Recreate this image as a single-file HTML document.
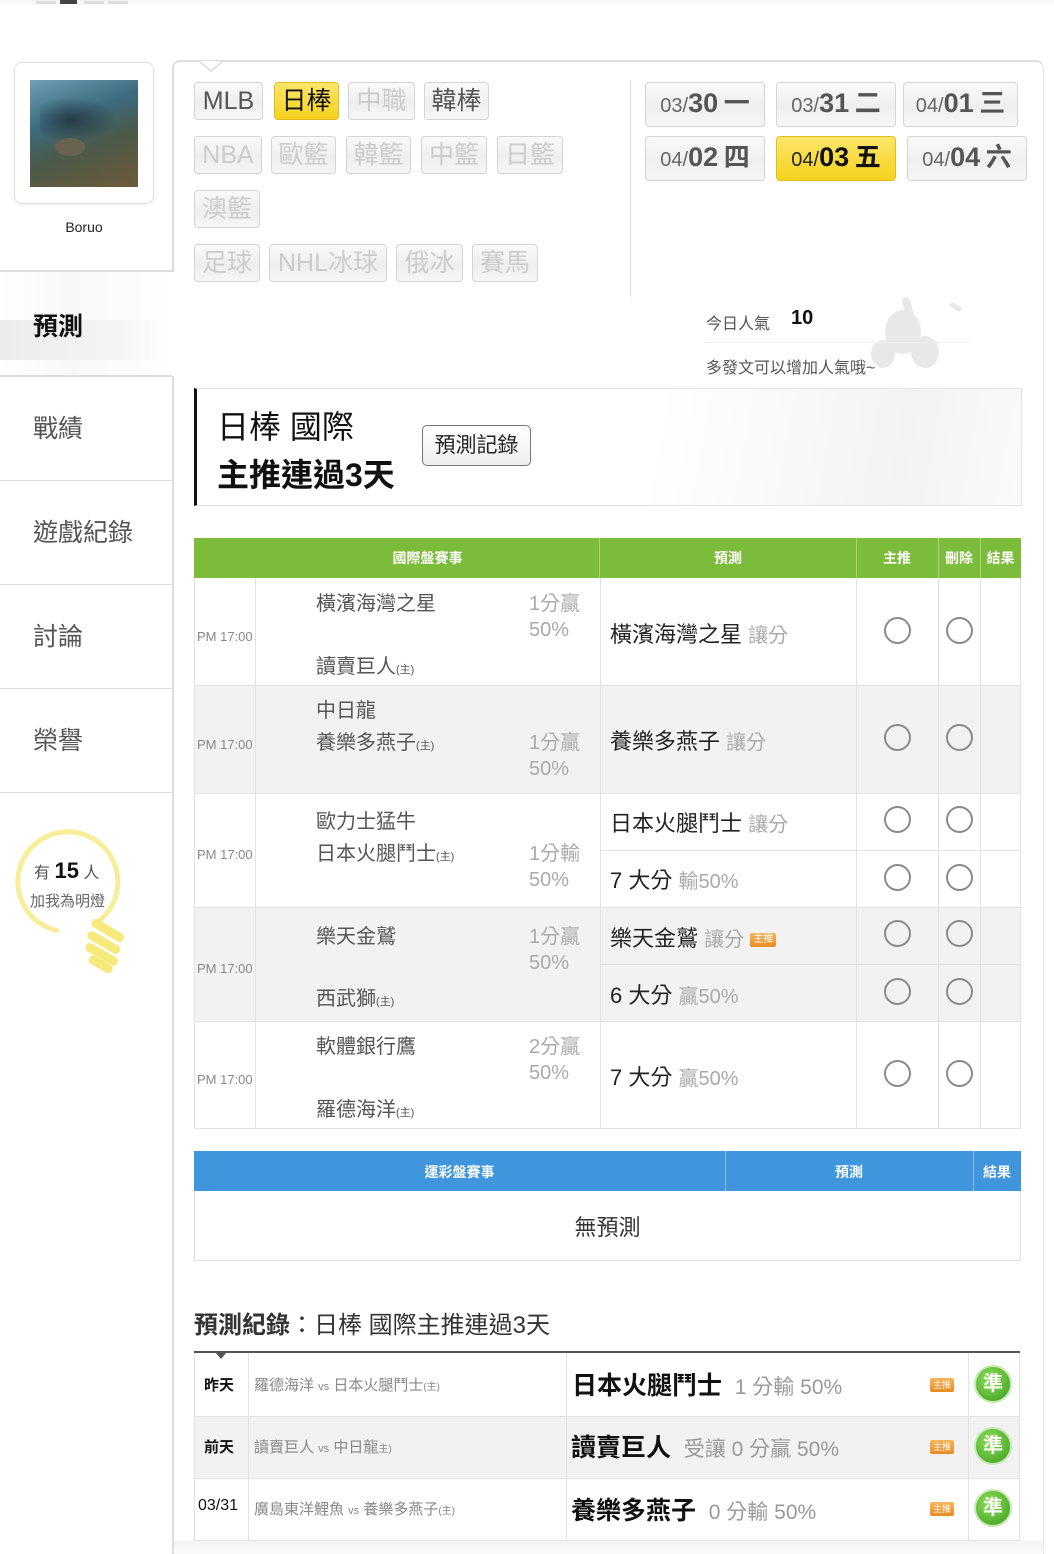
<!DOCTYPE html>
<html style="width:1054px;height:1554px;overflow:hidden"><head><meta charset="utf-8">
<style>
*{margin:0;padding:0;box-sizing:border-box}
body{width:1054px;height:1554px;position:relative;background:#fff;font-family:"Liberation Sans","Noto Sans CJK TC",sans-serif;overflow:hidden;color:#333}
.a{position:absolute}
.btn{position:absolute;border:1px solid #d4d4d4;border-radius:4px;background:linear-gradient(#fafafa,#eee 55%,#f6f6f6);font-size:25px;color:#ccc;text-align:center;line-height:36px;white-space:nowrap}
.btn.on{background:linear-gradient(#fde66a,#f5d21d);border-color:#e0be20;color:#111}
.btn.dk{color:#555}
.dt{position:absolute;border:1px solid #d4d4d4;border-radius:4px;background:linear-gradient(#fafafa,#efefef 55%,#f6f6f6);font-size:20px;color:#666;text-align:center;line-height:40px;white-space:nowrap}
.dt b{font-size:27px;color:#555}
.dt i{font-style:normal;font-size:26px;color:#555;font-weight:bold}
.dt.on{background:linear-gradient(#fde66a,#f5d21d);border-color:#e0be20;color:#222}
.dt.on b,.dt.on i{color:#111}
.menu{position:absolute;left:0;width:172px;height:104px;border-bottom:1px solid #ddd;font-size:25px;color:#555;padding-left:33px;line-height:104px}
.hl{position:absolute;background:#e2e2e2}
.t{position:absolute;white-space:nowrap}
.tm{font-size:13px;color:#888}
.tn{font-size:20px;color:#555}
.od{font-size:20px;color:#aaa}
.pr{font-size:22px;color:#222}
.pr span{color:#aaa;font-size:20px}
.c{position:absolute;width:27px;height:27px;border:2px solid #8a8a8a;border-radius:50%}
.zt{display:inline-block;background:linear-gradient(#f9b65c,#e98a20);color:#fff;font-size:10px;line-height:14px;padding:0 3px;border-radius:2px;vertical-align:middle}
.zh{position:absolute;width:38px;height:38px;border-radius:50%;background:radial-gradient(circle at 40% 35%,#8ee05a,#3a9a1c);border:2px solid #c8e9b4;color:#fff;font-size:20px;text-align:center;line-height:34px;font-weight:bold}
</style></head><body>
<div class="a" style="left:0;top:0;width:1054px;height:6px;background:linear-gradient(#f3f3f3,#fff)"></div>
<div class="a" style="left:36px;top:1px;width:20px;height:3px;background:#ddd"></div>
<div class="a" style="left:60px;top:0;width:17px;height:4px;background:#444"></div>
<div class="a" style="left:84px;top:1px;width:20px;height:3px;background:#ddd"></div>
<div class="a" style="left:108px;top:1px;width:20px;height:3px;background:#ddd"></div>

<div class="a" style="left:14px;top:62px;width:140px;height:142px;border:1px solid #e0e0e0;border-radius:8px;box-shadow:0 1px 3px rgba(0,0,0,.08)"></div>
<div class="a" style="left:30px;top:80px;width:108px;height:107px;background:linear-gradient(160deg,#6f9fb5 0%,#3c6b7f 35%,#4b5a4a 60%,#6e5a3a 100%)"></div>
<div class="a" style="left:40px;top:95px;width:80px;height:50px;background:radial-gradient(ellipse at 40% 50%,rgba(30,40,50,.7),transparent 65%)"></div>
<div class="a" style="left:55px;top:138px;width:30px;height:18px;border-radius:50%;background:#6a6250"></div>
<div class="t" style="left:0;width:168px;text-align:center;top:219px;font-size:14px;color:#222">Boruo</div>
<div class="a" style="left:0;top:270px;width:174px;height:2px;background:#ddd"></div>
<div class="a" style="left:0;top:272px;width:174px;height:104px;background:linear-gradient(90deg,#fff 0%,#f8f8f8 40%,#fff 100%)"></div>
<div class="a" style="left:0;top:320px;width:170px;height:40px;background:linear-gradient(90deg,#ececec,#f4f4f4 70%,#fff)"></div>
<div class="t" style="left:33px;top:307px;font-size:25px;font-weight:bold;color:#111">預測</div>
<div class="a" style="left:0;top:375px;width:172px;height:2px;background:#ddd"></div>
<div class="menu" style="top:377px">戰績</div>
<div class="menu" style="top:481px">遊戲紀錄</div>
<div class="menu" style="top:585px">討論</div>
<div class="menu" style="top:689px">榮譽</div>
<svg class="a" style="left:8px;top:826px" width="125" height="152" viewBox="0 0 125 152">
<path d="M51 105 A50 50 0 1 1 85 99" fill="none" stroke="#f8ee9a" stroke-width="5"/>
<g fill="#f7ea7c"><rect x="82" y="100" width="36" height="9" rx="4" transform="rotate(30 100 104)"/><rect x="78" y="112" width="36" height="9" rx="4" transform="rotate(30 96 116)"/><rect x="76" y="124" width="36" height="9" rx="4" transform="rotate(30 94 128)"/><rect x="80" y="134" width="26" height="9" rx="4" transform="rotate(30 93 138)"/></g>
</svg>
<div class="t" style="left:34px;top:858px;font-size:16px;color:#555">有 <b style="font-size:22px;color:#111">15</b> 人</div>
<div class="t" style="left:30px;top:890px;font-size:15px;color:#666">加我為明燈</div>

<div class="a" style="left:172px;top:60px;width:872px;height:1494px;border:2px solid #ddd;border-right:1px solid #e6e6e6;border-radius:8px 8px 0 0;border-bottom:none"></div>
<div class="a" style="left:200px;top:61px;width:20px;height:10px;background:#fff"></div>
<svg class="a" style="left:200px;top:60px" width="22" height="12"><path d="M0 2 L11 11 L22 2" fill="none" stroke="#ddd" stroke-width="1.5"/></svg>
<div class="a" style="left:172px;top:272px;width:3px;height:104px;background:#fff"></div>

<div class="btn dk" style="left:194px;top:82px;width:69px">MLB</div>
<div class="btn on" style="left:274px;top:82px;width:65px">日棒</div>
<div class="btn" style="left:348px;top:82px;width:67px">中職</div>
<div class="btn dk" style="left:424px;top:82px;width:65px">韓棒</div>
<div class="btn" style="left:194px;top:136px;width:68px">NBA</div>
<div class="btn" style="left:271px;top:136px;width:65px">歐籃</div>
<div class="btn" style="left:346px;top:136px;width:65px">韓籃</div>
<div class="btn" style="left:421px;top:136px;width:66px">中籃</div>
<div class="btn" style="left:497px;top:136px;width:66px">日籃</div>
<div class="btn" style="left:194px;top:190px;width:66px">澳籃</div>
<div class="btn" style="left:194px;top:244px;width:66px">足球</div>
<div class="btn" style="left:269px;top:244px;width:118px">NHL冰球</div>
<div class="btn" style="left:396px;top:244px;width:67px">俄冰</div>
<div class="btn" style="left:472px;top:244px;width:66px">賽馬</div>
<div class="a" style="left:630px;top:80px;width:1px;height:217px;background:#ddd"></div>

<div class="dt" style="left:645px;top:82px;width:120px">03/<b>30</b> <i>一</i></div>
<div class="dt" style="left:776px;top:82px;width:120px">03/<b>31</b> <i>二</i></div>
<div class="dt" style="left:903px;top:82px;width:115px">04/<b>01</b> <i>三</i></div>
<div class="dt" style="left:645px;top:136px;width:120px">04/<b>02</b> <i>四</i></div>
<div class="dt on" style="left:776px;top:136px;width:120px">04/<b>03</b> <i>五</i></div>
<div class="dt" style="left:907px;top:136px;width:120px">04/<b>04</b> <i>六</i></div>

<svg class="a" style="left:855px;top:292px" width="120" height="90"><g fill="#e8e8e8"><ellipse cx="48" cy="40" rx="18" ry="22"/><ellipse cx="70" cy="60" rx="14" ry="16"/><ellipse cx="28" cy="62" rx="12" ry="14"/><rect x="50" y="5" width="8" height="30" rx="4" transform="rotate(-15 54 20)"/><rect x="95" y="12" width="12" height="5" rx="2" transform="rotate(30 100 14)"/></g></svg>
<div class="t" style="left:706px;top:310px;font-size:16px;color:#555">今日人氣</div>
<div class="t" style="left:791px;top:307px;font-size:20px;font-weight:bold;color:#111">10</div>
<div class="a" style="left:705px;top:342px;width:265px;height:1px;background:#eee"></div>
<div class="t" style="left:706px;top:354px;font-size:16px;color:#555">多發文可以增加人氣哦~</div>

<div class="a" style="left:194px;top:388px;width:828px;height:118px;border:1px solid #e2e2e2;border-left:3px solid #111;background:linear-gradient(100deg,#fff 55%,#f3f3f3 85%,#fafafa)"></div>
<div class="t" style="left:217px;top:402px;font-size:32px;color:#111">日棒 國際</div>
<div class="t" style="left:217px;top:450px;font-size:32px;font-weight:bold;color:#111">主推連過3天</div>
<div class="a" style="left:422px;top:425px;width:109px;height:41px;border:1px solid #777;border-radius:5px;background:linear-gradient(#fff,#eee);font-size:21px;line-height:39px;text-align:center;color:#222">預測記錄</div>

<div class="a" style="left:194px;top:538px;width:827px;height:40px;background:#7cbc3b"></div>
<div class="t" style="left:255px;width:345px;text-align:center;top:548px;font-size:14px;font-weight:bold;color:#fff">國際盤賽事</div>
<div class="t" style="left:600px;width:256px;text-align:center;top:548px;font-size:14px;font-weight:bold;color:#fff">預測</div>
<div class="t" style="left:856px;width:82px;text-align:center;top:548px;font-size:14px;font-weight:bold;color:#fff">主推</div>
<div class="t" style="left:938px;width:42px;text-align:center;top:548px;font-size:14px;font-weight:bold;color:#fff">刪除</div>
<div class="t" style="left:980px;width:41px;text-align:center;top:548px;font-size:14px;font-weight:bold;color:#fff">結果</div>
<div class="a" style="left:599px;top:538px;width:1px;height:40px;background:#aad282"></div>
<div class="a" style="left:856px;top:538px;width:1px;height:40px;background:#aad282"></div>
<div class="a" style="left:938px;top:538px;width:1px;height:40px;background:#aad282"></div>
<div class="a" style="left:980px;top:538px;width:1px;height:40px;background:#aad282"></div>

<div class="a" style="left:194px;top:578px;width:827px;height:551px;border:1px solid #e2e2e2;border-top:none"></div>
<div class="a" style="left:195px;top:686px;width:825px;height:107px;background:#f2f2f2"></div>
<div class="a" style="left:195px;top:908px;width:825px;height:113px;background:#f2f2f2"></div>
<div class="hl" style="left:194px;top:685px;width:827px;height:1px"></div>
<div class="hl" style="left:194px;top:793px;width:827px;height:1px"></div>
<div class="hl" style="left:194px;top:907px;width:827px;height:1px"></div>
<div class="hl" style="left:194px;top:1021px;width:827px;height:1px"></div>
<div class="hl" style="left:600px;top:850px;width:421px;height:1px"></div>
<div class="hl" style="left:600px;top:964px;width:421px;height:1px"></div>
<div class="hl" style="left:255px;top:578px;width:1px;height:550px"></div>
<div class="hl" style="left:600px;top:578px;width:1px;height:550px"></div>
<div class="hl" style="left:856px;top:578px;width:1px;height:550px"></div>
<div class="hl" style="left:938px;top:578px;width:1px;height:550px"></div>
<div class="hl" style="left:980px;top:578px;width:1px;height:550px"></div>

<div class="t tm" style="left:197px;top:629px">PM 17:00</div>
<div class="t tn" style="left:316px;top:587px">橫濱海灣之星</div>
<div class="t tn" style="left:316px;top:650px">讀賣巨人<small style="font-size:11px">(主)</small></div>
<div class="t od" style="left:529px;top:587px">1分贏</div>
<div class="t od" style="left:529px;top:619px">50%</div>
<div class="t pr" style="left:610px;top:617px">橫濱海灣之星 <span>讓分</span></div>
<div class="c" style="left:884px;top:617px"></div><div class="c" style="left:946px;top:617px"></div>

<div class="t tm" style="left:197px;top:737px">PM 17:00</div>
<div class="t tn" style="left:316px;top:694px">中日龍</div>
<div class="t tn" style="left:316px;top:726px">養樂多燕子<small style="font-size:11px">(主)</small></div>
<div class="t od" style="left:529px;top:726px">1分贏</div>
<div class="t od" style="left:529px;top:758px">50%</div>
<div class="t pr" style="left:610px;top:724px">養樂多燕子 <span>讓分</span></div>
<div class="c" style="left:884px;top:724px"></div><div class="c" style="left:946px;top:724px"></div>

<div class="t tm" style="left:197px;top:847px">PM 17:00</div>
<div class="t tn" style="left:316px;top:805px">歐力士猛牛</div>
<div class="t tn" style="left:316px;top:837px">日本火腿鬥士<small style="font-size:11px">(主)</small></div>
<div class="t od" style="left:529px;top:837px">1分輸</div>
<div class="t od" style="left:529px;top:869px">50%</div>
<div class="t pr" style="left:610px;top:806px">日本火腿鬥士 <span>讓分</span></div>
<div class="t pr" style="left:610px;top:863px">7 大分 <span>輸50%</span></div>
<div class="c" style="left:884px;top:806px"></div><div class="c" style="left:946px;top:806px"></div>
<div class="c" style="left:884px;top:864px"></div><div class="c" style="left:946px;top:864px"></div>

<div class="t tm" style="left:197px;top:961px">PM 17:00</div>
<div class="t tn" style="left:316px;top:920px">樂天金鷲</div>
<div class="t tn" style="left:316px;top:982px">西武獅<small style="font-size:11px">(主)</small></div>
<div class="t od" style="left:529px;top:920px">1分贏</div>
<div class="t od" style="left:529px;top:952px">50%</div>
<div class="t pr" style="left:610px;top:921px">樂天金鷲 <span>讓分</span> <i class="zt" style="font-style:normal">主推</i></div>
<div class="t pr" style="left:610px;top:978px">6 大分 <span>贏50%</span></div>
<div class="c" style="left:884px;top:920px"></div><div class="c" style="left:946px;top:920px"></div>
<div class="c" style="left:884px;top:978px"></div><div class="c" style="left:946px;top:978px"></div>

<div class="t tm" style="left:197px;top:1072px">PM 17:00</div>
<div class="t tn" style="left:316px;top:1030px">軟體銀行鷹</div>
<div class="t tn" style="left:316px;top:1093px">羅德海洋<small style="font-size:11px">(主)</small></div>
<div class="t od" style="left:529px;top:1030px">2分贏</div>
<div class="t od" style="left:529px;top:1062px">50%</div>
<div class="t pr" style="left:610px;top:1060px">7 大分 <span>贏50%</span></div>
<div class="c" style="left:884px;top:1060px"></div><div class="c" style="left:946px;top:1060px"></div>

<div class="a" style="left:194px;top:1151px;width:827px;height:40px;background:#3f96dc"></div>
<div class="a" style="left:725px;top:1151px;width:1px;height:40px;background:#8cc0ea"></div>
<div class="a" style="left:973px;top:1151px;width:1px;height:40px;background:#8cc0ea"></div>
<div class="t" style="left:194px;width:531px;text-align:center;top:1162px;font-size:14px;font-weight:bold;color:#fff">運彩盤賽事</div>
<div class="t" style="left:725px;width:248px;text-align:center;top:1162px;font-size:14px;font-weight:bold;color:#fff">預測</div>
<div class="t" style="left:973px;width:48px;text-align:center;top:1162px;font-size:14px;font-weight:bold;color:#fff">結果</div>
<div class="a" style="left:194px;top:1191px;width:827px;height:70px;border:1px solid #e2e2e2;border-top:none"></div>
<div class="t" style="left:194px;width:827px;text-align:center;top:1210px;font-size:22px;color:#333">無預測</div>

<div class="t" style="left:194px;top:1305px;font-size:24px;color:#333"><b>預測紀錄</b>：日棒 國際主推連過3天</div>
<div class="a" style="left:194px;top:1351px;width:826px;height:2px;background:#555"></div>
<svg class="a" style="left:215px;top:1352px" width="12" height="8"><path d="M0 0 L6 7 L12 0Z" fill="#555"/></svg>
<div class="a" style="left:195px;top:1417px;width:824px;height:61px;background:#f2f2f2"></div>
<div class="a" style="left:194px;top:1353px;width:826px;height:188px;border:1px solid #e2e2e2;border-top:none"></div>
<div class="hl" style="left:194px;top:1416px;width:826px;height:1px"></div>
<div class="hl" style="left:194px;top:1478px;width:826px;height:1px"></div>
<div class="hl" style="left:248px;top:1353px;width:1px;height:188px"></div>
<div class="hl" style="left:566px;top:1353px;width:1px;height:188px"></div>
<div class="hl" style="left:968px;top:1353px;width:1px;height:188px"></div>

<div class="t" style="left:204px;top:1374px;font-size:15px;font-weight:bold;color:#111">昨天</div>
<div class="t" style="left:254px;top:1374px;font-size:15px;color:#888">羅德海洋 <small style="font-size:11px">vs</small> 日本火腿鬥士<small style="font-size:10px">(主)</small></div>
<div class="t" style="left:572px;top:1366px;font-size:25px;font-weight:bold;color:#111">日本火腿鬥士 <span style="font-weight:normal;color:#999;font-size:21px">&nbsp;1 分輸 50%</span></div>
<div class="t" style="left:930px;top:1376px"><i class="zt" style="font-style:normal;font-size:9px">主推</i></div>
<div class="zh" style="left:974px;top:1365px">準</div>

<div class="t" style="left:204px;top:1436px;font-size:15px;font-weight:bold;color:#111">前天</div>
<div class="t" style="left:254px;top:1436px;font-size:15px;color:#888">讀賣巨人 <small style="font-size:11px">vs</small> 中日龍<small style="font-size:10px">主)</small></div>
<div class="t" style="left:571px;top:1428px;font-size:25px;font-weight:bold;color:#111">讀賣巨人 <span style="font-weight:normal;color:#999;font-size:21px">&nbsp;受讓 0 分贏 50%</span></div>
<div class="t" style="left:930px;top:1438px"><i class="zt" style="font-style:normal;font-size:9px">主推</i></div>
<div class="zh" style="left:974px;top:1427px">準</div>

<div class="t" style="left:198px;top:1497px;font-size:16px;color:#111">03/31</div>
<div class="t" style="left:254px;top:1498px;font-size:15px;color:#888">廣島東洋鯉魚 <small style="font-size:11px">vs</small> 養樂多燕子<small style="font-size:10px">(主)</small></div>
<div class="t" style="left:571px;top:1491px;font-size:25px;font-weight:bold;color:#111">養樂多燕子 <span style="font-weight:normal;color:#999;font-size:21px">&nbsp;0 分輸 50%</span></div>
<div class="t" style="left:930px;top:1500px"><i class="zt" style="font-style:normal;font-size:9px">主推</i></div>
<div class="zh" style="left:974px;top:1489px">準</div>
<div class="a" style="left:174px;top:1541px;width:869px;height:13px;background:linear-gradient(#f4f4f4,#fafafa)"></div>
</body></html>
